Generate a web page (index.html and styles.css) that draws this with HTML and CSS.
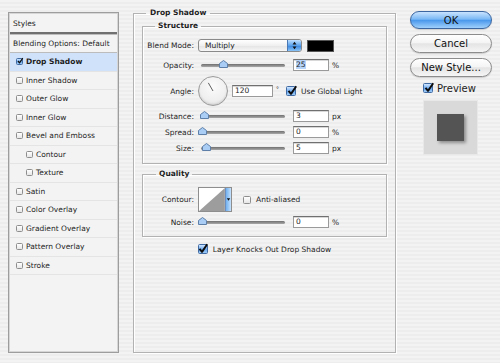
FILE: index.html
```html
<!DOCTYPE html>
<html>
<head>
<meta charset="utf-8">
<link rel="stylesheet" href="styles.css">
</head>
<body>
<div class="dialog">
  <aside class="styles">
    <div class="list-head">Styles</div>
    <div class="item blend">Blending Options: Default</div>
    <div class="item sel"><span class="cb on"><svg viewBox="0 0 10 10"><path d="M1.6 5 L4.2 8.2 L9.6 0.2" /></svg></span>Drop Shadow</div>
    <div class="item"><span class="cb"></span>Inner Shadow</div>
    <div class="item"><span class="cb"></span>Outer Glow</div>
    <div class="item"><span class="cb"></span>Inner Glow</div>
    <div class="item"><span class="cb"></span>Bevel and Emboss</div>
    <div class="item sub"><span class="cb"></span>Contour</div>
    <div class="item sub"><span class="cb"></span>Texture</div>
    <div class="item"><span class="cb"></span>Satin</div>
    <div class="item"><span class="cb"></span>Color Overlay</div>
    <div class="item"><span class="cb"></span>Gradient Overlay</div>
    <div class="item"><span class="cb"></span>Pattern Overlay</div>
    <div class="item"><span class="cb"></span>Stroke</div>
  </aside>

  <fieldset class="group main">
    <legend>Drop Shadow</legend>
    <fieldset class="group inner structure">
      <legend>Structure</legend>
      <div class="frow r-blend">
        <span class="lbl">Blend Mode:</span>
        <div class="popup"><span class="pop-text">Multiply</span><span class="step"><svg viewBox="0 0 14 13"><path d="M7 2.2 L9.3 5.2 H4.7Z M7 10.8 L9.3 7.8 H4.7Z"/></svg></span></div>
        <span class="swatch"></span>
      </div>
      <div class="frow r-opacity">
        <span class="lbl">Opacity:</span>
        <div class="slider"><span class="thumb" style="left:25px"><svg viewBox="0 0 9 8"><path d="M4.5 0.5 L8.5 3.5 V7.5 H0.5 V3.5Z"/></svg></span></div>
        <span class="field"><span class="hl">25</span></span>
        <span class="unit">%</span>
      </div>
      <div class="frow r-angle">
        <span class="lbl">Angle:</span>
        <span class="dial"><svg viewBox="0 0 30 30"><path d="M15 15 L10 6.3"/></svg></span>
        <span class="field wide">120</span>
        <span class="deg">°</span>
        <span class="cb big on gl"><svg viewBox="0 0 10 10"><path d="M1.6 5 L4.2 8.2 L9.6 0.2" /></svg></span>
        <span class="cb-text">Use Global Light</span>
      </div>
      <div class="frow">
        <span class="lbl">Distance:</span>
        <div class="slider"><span class="thumb" style="left:6px"><svg viewBox="0 0 9 8"><path d="M4.5 0.5 L8.5 3.5 V7.5 H0.5 V3.5Z"/></svg></span></div>
        <span class="field">3</span>
        <span class="unit">px</span>
      </div>
      <div class="frow">
        <span class="lbl">Spread:</span>
        <div class="slider"><span class="thumb" style="left:4px"><svg viewBox="0 0 9 8"><path d="M4.5 0.5 L8.5 3.5 V7.5 H0.5 V3.5Z"/></svg></span></div>
        <span class="field">0</span>
        <span class="unit">%</span>
      </div>
      <div class="frow">
        <span class="lbl">Size:</span>
        <div class="slider"><span class="thumb" style="left:8px"><svg viewBox="0 0 9 8"><path d="M4.5 0.5 L8.5 3.5 V7.5 H0.5 V3.5Z"/></svg></span></div>
        <span class="field">5</span>
        <span class="unit">px</span>
      </div>
    </fieldset>

    <fieldset class="group inner quality">
      <legend>Quality</legend>
      <div class="frow r-contour">
        <span class="lbl">Contour:</span>
        <span class="contour"><svg viewBox="0 0 28 25"><path d="M0 25 L28 0 V25Z"/></svg><span class="drop"><svg viewBox="0 0 6 25"><path d="M1 11 H5 L3 14Z"/></svg></span></span>
        <span class="cb mid"></span>
        <span class="cb-text">Anti-aliased</span>
      </div>
      <div class="frow">
        <span class="lbl">Noise:</span>
        <div class="slider"><span class="thumb" style="left:4px"><svg viewBox="0 0 9 8"><path d="M4.5 0.5 L8.5 3.5 V7.5 H0.5 V3.5Z"/></svg></span></div>
        <span class="field">0</span>
        <span class="unit">%</span>
      </div>
    </fieldset>

    <div class="knock"><span class="cb big on"><svg viewBox="0 0 10 10"><path d="M1.6 5 L4.2 8.2 L9.6 0.2" /></svg></span><span class="cb-text">Layer Knocks Out Drop Shadow</span></div>
  </fieldset>

  <div class="actions">
    <div class="btn ok">OK</div>
    <div class="btn">Cancel</div>
    <div class="btn">New Style...</div>
    <div class="preview-row"><span class="cb big on"><svg viewBox="0 0 10 10"><path d="M1.6 5 L4.2 8.2 L9.6 0.2" /></svg></span><span class="preview-label">Preview</span></div>
    <div class="preview-box"><span class="preview-square"></span></div>
  </div>
</div>
</body>
</html>
```
FILE: styles.css
```css
* { box-sizing: border-box; }
html, body { margin: 0; }
body {
  width: 500px;
  height: 363px;
  overflow: hidden;
  background: repeating-linear-gradient(#f3f3f3 0 2px, #ededed 2px 4px);
  font-family: "DejaVu Sans", sans-serif;
  font-size: 7.5px;
  color: #1e1e1e;
}
fieldset { margin: 0; min-width: 0; }
.dialog {
  display: flex;
  align-items: flex-start;
  gap: 14px;
  padding: 0 8px;
}

/* Styles list */
.styles {
  width: 111px;
  height: 341px;
  margin-top: 12px;
  border: 1px solid #9d9d9d;
  box-shadow: inset 0 0 0 1px #d6d6d6;
  background: #f3f3f3;
  padding: 1px;
}
.list-head {
  height: 20px;
  padding-left: 3px;
  display: flex;
  align-items: center;
  border-bottom: 2px solid #707070;
  box-shadow: 0 1px 0 #bdbdbd;
}
.item {
  height: 18.5px;
  display: flex;
  align-items: center;
  padding-left: 6px;
  border-bottom: 1px solid #e4e4e4;
}
.item.blend {
  height: 19px;
  padding-left: 3px;
  border-bottom: 1px solid #bcbcbc;
}
.item.sel { background: #cfe2fa; font-weight: bold; }
.item.sub { padding-left: 16px; }
.item .cb { margin-right: 3px; }

/* checkboxes */
.cb {
  position: relative;
  flex: none;
  display: inline-block;
  width: 7px;
  height: 7px;
  border: 1px solid #8e8e8e;
  border-radius: 1.5px;
  background: linear-gradient(#ffffff, #e6e6e6);
}
.cb.mid { width: 8px; height: 8px; }
.cb.big { width: 10px; height: 10px; }
.cb.on {
  border-color: #3f6aa3;
  background: linear-gradient(#cfe6ff, #6aa8ee 55%, #9ccaf7);
}
.cb svg {
  position: absolute;
  left: -0.5px;
  top: -1.5px;
  width: 120%;
  height: 120%;
  overflow: visible;
}
.cb svg path { fill: none; stroke: #0c0c0c; stroke-width: 2; stroke-linejoin: round; }
.cb-text { margin-left: 5px; }
.cb.gl { margin-left: 3px; }

/* group boxes */
.group {
  border: 1px solid #b2b2b2;
  box-shadow: 1px 1px 0 #ffffff, inset 1px 1px 0 #ffffff;
}
.group > legend {
  font-weight: bold;
  line-height: 10px;
  padding: 0 3px;
}
.main {
  width: 263px;
  height: 345px;
  margin-top: 8px;
  padding: 0 8px;
}
.main > legend { margin-left: 4px; padding: 0 4px; }
.inner > legend { margin-left: 12px; }
.structure { margin-top: 3px; padding: 8px 0 9px; }
.quality { margin-top: 5px; padding: 8px 0 8px; }
.quality > legend { margin-left: 13px; }

.frow {
  display: flex;
  align-items: center;
  height: 12px;
  margin-top: 4px;
}
.frow.r-blend { height: 13px; margin-top: 0; }
.frow.r-opacity { margin-top: 7px; }
.frow.r-angle { height: 30px; margin-top: 5px; }
.frow.r-contour { height: 25px; margin-top: 0; }
.lbl {
  width: 51px;
  margin-right: 4px;
  text-align: right;
  flex: none;
}

/* popup */
.popup {
  width: 104px;
  height: 13px;
  display: flex;
  border: 1px solid #8a8a8a;
  border-radius: 3px;
  background: linear-gradient(#ffffff, #f0f0f0 50%, #e3e3e3 51%, #f7f7f7);
  overflow: hidden;
}
.pop-text { flex: 1; padding-left: 6px; line-height: 11px; }
.step {
  width: 14px;
  height: 11px;
  background: linear-gradient(#bfe0ff, #5aa1ec 50%, #3c88e0 55%, #8ac4f7);
  border-left: 1px solid #4a78b5;
}
.step svg { width: 13px; height: 11px; display: block; }
.step path { fill: #111; }
.swatch {
  width: 27px;
  height: 12px;
  margin-left: 5px;
  background: #000;
  border: 1px solid #555;
}

/* slider */
.slider {
  position: relative;
  flex: none;
  width: 87px;
  height: 12px;
}
.slider::before {
  content: "";
  position: absolute;
  left: 3px;
  right: 0;
  top: 5px;
  height: 3px;
  border-radius: 2px;
  background: linear-gradient(#6f6f6f, #a9a9a9);
}
.thumb {
  position: absolute;
  top: 1px;
  width: 9px;
  height: 8px;
  margin-left: -4.5px;
}
.thumb svg { display: block; width: 9px; height: 8px; overflow: visible; }
.thumb path { fill: #a9cdf4; stroke: #5d7fa8; stroke-width: 1; }

/* text fields */
.field {
  flex: none;
  width: 36px;
  height: 12px;
  margin-left: 8px;
  padding-left: 2px;
  line-height: 10px;
  background: #fff;
  border: 1px solid #9a9a9a;
  border-top-color: #707070;
  box-shadow: inset 0 1px 0 #d8d8d8;
}
.field.wide { width: 41px; margin-left: 4px; }
.hl { background: #b6d4f8; }
.unit { margin-left: 3px; }
.deg { margin: 0 0 6px 3px; font-size: 6px; width: 7px; }

/* dial */
.dial {
  width: 30px;
  height: 30px;
  border-radius: 50%;
  border: 1px solid #9b9b9b;
  background: radial-gradient(circle at 50% 35%, #fbfbfb 0, #efefef 60%, #d9d9d9 100%);
  box-shadow: inset 0 -1px 2px rgba(0,0,0,.12);
}
.dial svg { width: 28px; height: 28px; display: block; }
.dial path { stroke: #555; stroke-width: 1; fill: none; }

/* contour */
.contour {
  display: flex;
  height: 25px;
  width: 34px;
  margin-right: 11px;
  border: 1px solid #8e8e8e;
  background: #fff;
}
.contour > svg { width: 27px; height: 23px; display: block; }
.contour > svg path { fill: #9d9d9d; }
.drop {
  width: 6px;
  background: linear-gradient(90deg, #70b0f0, #c6e2fd);
  border-left: 1px solid #6c8fbf;
}
.drop svg { width: 5px; height: 23px; display: block; }
.drop path { fill: #111; }

.knock {
  display: flex;
  align-items: center;
  justify-content: center;
  margin-top: 7px;
  height: 10px;
}

/* actions */
.actions {
  width: 82px;
  margin-top: 11px;
  display: flex;
  flex-direction: column;
}
.btn {
  height: 19px;
  margin-top: 5px;
  border-radius: 10px;
  border: 1px solid #8c8c8c;
  background: linear-gradient(#ffffff, #f4f4f4 45%, #e4e4e4 52%, #f6f6f6);
  box-shadow: 0 1px 1px rgba(0,0,0,.15);
  font-size: 10px;
  display: flex;
  align-items: center;
  justify-content: center;
  color: #111;
}
.btn.ok {
  height: 18px;
  margin-top: 0;
  border-color: #3b66a0;
  background: linear-gradient(#c9e3ff, #7ab8f5 45%, #4a98ec 52%, #9fd0fb);
}
.preview-row {
  display: flex;
  align-items: center;
  margin: 6px 0 0 13px;
  height: 10px;
}
.preview-label { margin-left: 4px; font-size: 10px; }
.preview-box {
  width: 55px;
  height: 55px;
  margin: 7px 0 0 13px;
  background: #d9d9d9;
  border: 1px solid #e8e8e8;
  display: flex;
  align-items: center;
  justify-content: center;
}
.preview-square {
  width: 27px;
  height: 27px;
  background: #545454;
  box-shadow: 2px 2px 3px rgba(0,0,0,.35);
}
```
